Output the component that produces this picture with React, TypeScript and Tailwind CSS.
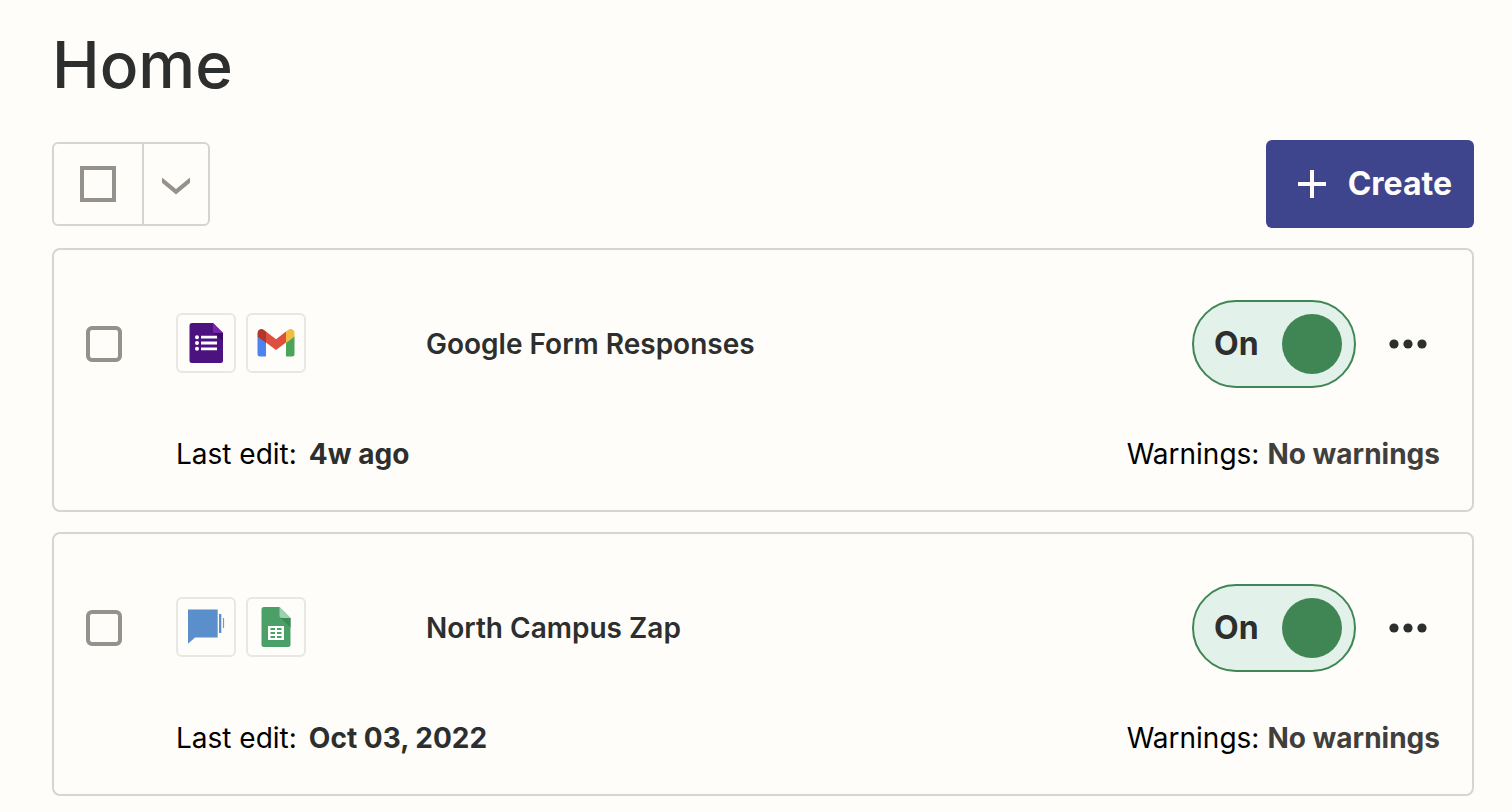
import { useState } from "react";

type IconKind = "forms" | "gmail" | "voice" | "sheets";

interface Zap {
  name: string;
  icons: IconKind[];
  lastEdit: string;
  warnings: string;
}

const zaps: Zap[] = [
  { name: "Google Form Responses", icons: ["forms", "gmail"], lastEdit: "4w ago", warnings: "No warnings" },
  { name: "North Campus Zap", icons: ["voice", "sheets"], lastEdit: "Oct 03, 2022", warnings: "No warnings" },
];

function FormsIcon() {
  return (
    <svg viewBox="0 0 40 40" className="size-10" aria-label="Google Forms" role="img">
      <path d="M6 0h21l10 10v27.500a2.500 2.500 0 0 1-2.500 2.500h-28.500A2.500 2.500 0 0 1 3.500 37.500V2.500A2.500 2.500 0 0 1 6 0z" fill="#4b1280" />
      <path d="M28 10h9v8z" fill="#370b65" />
      <path d="M27 0l10 10h-8.500A1.500 1.500 0 0 1 27 8.500z" fill="#7b23aa" />
      <g fill="#fff">
        <circle cx="11" cy="14.200" r="2" />
        <circle cx="11" cy="20" r="2" />
        <circle cx="11" cy="25.800" r="2" />
        <path d="M15 12.800h16v2.800H15zM15 18.600h16v2.800H15zM15 24.400h16v2.800H15z" />
      </g>
    </svg>
  );
}

function GmailIcon() {
  return (
    <svg viewBox="0 0 40 40" className="size-10" aria-label="Gmail" role="img">
      <path d="M1.500 13l8.500 6.500V33.500H4A2.500 2.500 0 0 1 1.500 31z" fill="#4c83ee" />
      <path d="M38.500 13L30 19.500V33.500h6a2.500 2.500 0 0 0 2.500-2.500z" fill="#4aa55a" />
      <path d="M30 8.500l2-1.600c2.700-2 6.500-.2 6.500 3.200V13.500L30 20z" fill="#f0bd42" />
      <path d="M10 8.500L8 6.900c-2.700-2-6.500-.2-6.500 3.200V13.500L10 20z" fill="#b3362a" />
      <path d="M10 8.500l10 7.800 10-7.800V19.500L20 27 10 19.500z" fill="#dc5040" />
    </svg>
  );
}

function VoiceIcon() {
  return (
    <svg viewBox="0 0 40 40" className="size-10" aria-label="Messages" role="img">
      <path d="M2 2.500h29.700v28H9L2 36.700z" fill="#5a8fcc" />
      <path d="M33 7h2.300v19H33z" fill="#5a8fcc" />
      <path d="M36.900 11h1.200v10h-1.200z" fill="#6d9cd2" />
    </svg>
  );
}

function SheetsIcon() {
  return (
    <svg viewBox="0 0 40 40" className="size-10" aria-label="Google Sheets" role="img">
      <path d="M8 0h15.500l11 11v26.500A2.500 2.500 0 0 1 32 40H8a2.500 2.500 0 0 1-2.500-2.500v-35A2.500 2.500 0 0 1 8 0z" fill="#4aa066" />
      <path d="M24.500 11h10v9.500z" fill="#3c8a56" />
      <path d="M23.500 0l11 11H26a2.500 2.500 0 0 1-2.500-2.500z" fill="#9ed1b0" />
      <path
        fillRule="evenodd"
        d="M12 19h16v14H12zM14.500 21v2H19v-2zM21 21v2h4.500v-2zM14.500 25v2H19v-2zM21 25v2h4.500v-2zM14.500 29v2H19v-2zM21 29v2h4.500v-2z"
        fill="#fff"
      />
    </svg>
  );
}

const iconMap = { forms: FormsIcon, gmail: GmailIcon, voice: VoiceIcon, sheets: SheetsIcon };

function AppTile({ kind }: { kind: IconKind }) {
  const Icon = iconMap[kind];
  return (
    <span className="flex size-[60px] items-center justify-center rounded-md border-2 border-[#e8e7e4]">
      <Icon />
    </span>
  );
}

function Toggle({ label }: { label: string }) {
  const [on, setOn] = useState(true);
  return (
    <button
      type="button"
      role="switch"
      aria-checked={on}
      aria-label={label}
      onClick={() => setOn(!on)}
      className="flex h-[88px] w-[164px] items-center justify-between rounded-full border-2 border-[#3f8654] bg-[#e2f1ea] pr-3 pl-5 text-[32px] font-bold text-[#2d2e2e]"
    >
      {on ? "On" : "Off"}
      <span className="size-[60px] rounded-full bg-[#3f8654]" />
    </button>
  );
}

function ZapCard({ zap }: { zap: Zap }) {
  return (
    <li className="rounded-lg border-2 border-[#d7d5d2] px-8 pt-[50px] pb-9">
      <div className="flex items-center">
        <div className="flex w-[90px]">
          <input
            type="checkbox"
            aria-label={`Select ${zap.name}`}
            className="size-9 appearance-none rounded-md border-4 border-[#95928e] checked:bg-[#95928e]"
          />
        </div>
        <div className="flex w-[250px] gap-2.5 pb-0.5">
          {zap.icons.map((kind) => (
            <AppTile key={kind} kind={kind} />
          ))}
        </div>
        <a href="#" className="flex-1 text-[28px] font-semibold">
          {zap.name}
        </a>
        <div className="flex items-center gap-5">
          <Toggle label={`${zap.name} status`} />
          <button type="button" aria-label={`More actions for ${zap.name}`} className="flex h-16 w-16 items-center justify-center">
            <svg viewBox="0 0 38 10" className="h-2.5 w-[38px]" fill="#2d2e2e" aria-hidden="true">
              <circle cx="5" cy="5" r="4.600" />
              <circle cx="19" cy="5" r="4.600" />
              <circle cx="33" cy="5" r="4.600" />
            </svg>
          </button>
        </div>
      </div>
      <div className="mt-[46px] flex justify-between pl-[90px] text-[28px] leading-10">
        <p className="flex gap-3">
          <span className="text-black">Last edit:</span>
          <span className="font-bold">{zap.lastEdit}</span>
        </p>
        <p className="flex gap-2">
          <span className="text-black">Warnings:</span>
          <span className="font-bold text-[#403f3e]">{zap.warnings}</span>
        </p>
      </div>
    </li>
  );
}

export default function App() {
  return (
    <main className="min-h-screen bg-[#fffdf9] pt-[25px] pr-[38px] pb-4 pl-[52px] font-['Inter',sans-serif] text-[#2d2e2e]">
      <h1 className="text-[64px] leading-[80px] font-medium">Home</h1>
      <div className="mt-[35px] flex items-center justify-between">
        <div className="flex h-[84px] rounded-md border-2 border-[#d7d5d2]">
          <label className="flex w-[90px] items-center justify-center border-r-2 border-[#d7d5d2]">
            <input
              type="checkbox"
              aria-label="Select all"
              className="size-9 appearance-none border-4 border-[#95928e] checked:bg-[#95928e]"
            />
          </label>
          <button type="button" aria-label="Selection options" className="flex w-16 items-center justify-center">
            <svg viewBox="0 0 28 18" className="mt-1 h-[18px] w-7" fill="#95928e" aria-hidden="true">
              <path d="M0 .6l14 11.400L28 .6v5.200L14 17.400 0 5.800z" />
            </svg>
          </button>
        </div>
        <button
          type="button"
          className="flex h-[88px] w-52 items-center justify-end gap-[22px] rounded-md bg-[#3f458c] pr-[22px] text-[32px] font-bold text-[#fffdf9]"
        >
          <svg viewBox="0 0 28 28" className="size-7" fill="currentColor" aria-hidden="true">
            <path d="M12 0h4v12h12v4H16v12h-4V16H0v-4h12z" />
          </svg>
          Create
        </button>
      </div>
      <ul className="mt-5 flex flex-col gap-5">
        {zaps.map((zap) => (
          <ZapCard key={zap.name} zap={zap} />
        ))}
      </ul>
    </main>
  );
}
